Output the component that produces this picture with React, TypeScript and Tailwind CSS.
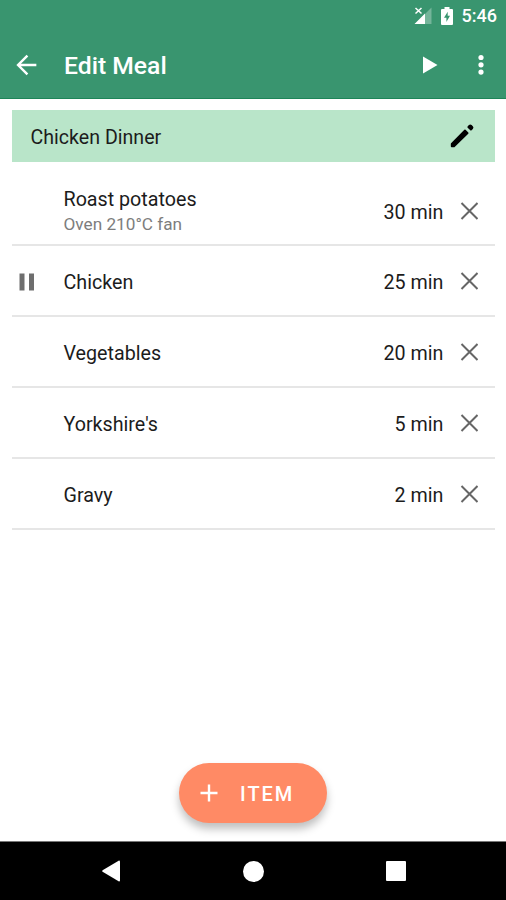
/* ================= DATA ================= */

type MealItem = {
  name: string;
  note?: string;
  minutes: number;
  paused?: boolean;
};

const items: MealItem[] = [
  { name: "Roast potatoes", note: "Oven 210°C fan", minutes: 30 },
  { name: "Chicken", minutes: 25, paused: true },
  { name: "Vegetables", minutes: 20 },
  { name: "Yorkshire's", minutes: 5 },
  { name: "Gravy", minutes: 2 },
];

/* ================= STATUS BAR ================= */

function StatusBar() {
  return (
    <div className="flex h-8 items-center justify-end pr-[9px] text-white">
      <svg className="mr-[9px] h-[18px] w-[18px]" viewBox="0 0 18 18" fill="currentColor">
        <path d="M17.500 0.500V17H1z" opacity="0.3" />
        <path d="M11 6.500V17H0.500z" />
        <path d="M1.500 1l6 5.500M7.500 1l-6 5.500" stroke="currentColor" strokeWidth="1.500" />
      </svg>
      <svg className="mr-[9px] h-[18px] w-3" viewBox="0 0 12 18">
        <path
          d="M3.500 0h5v2H11a1 1 0 0 1 1 1v14a1 1 0 0 1-1 1H1a1 1 0 0 1-1-1V3a1 1 0 0 1 1-1h2.500z"
          fill="currentColor"
        />
        <path d="M6.700 4.800v4H9L5.400 15v-4.300H3z" fill="#39956f" />
      </svg>
      <span className="text-[18px] leading-none font-medium">5:46</span>
    </div>
  );
}

/* ================= TOOLBAR ================= */

function Toolbar() {
  return (
    <div className="flex h-[66px] items-center pl-[10px] text-white">
      <button aria-label="Back">
        <svg className="h-[34px] w-[34px]" viewBox="0 0 24 24" fill="none" stroke="currentColor" strokeWidth="1.7">
          <path d="M18.600 12H6M12.300 5.400L5.700 12l6.600 6.600" />
        </svg>
      </button>
      <h1 className="ml-5 flex-1 pt-[2px] text-[24.700px] leading-none font-medium">Edit Meal</h1>
      <button aria-label="Start">
        <svg className="h-[18px] w-4" viewBox="0 0 16 18" fill="currentColor">
          <path d="M1 0.500v17L15.500 9z" />
        </svg>
      </button>
      <button aria-label="More options" className="mr-[22px] ml-10">
        <svg className="h-[22px] w-[6px]" viewBox="0 0 6 22" fill="currentColor">
          <circle cx="3" cy="3.500" r="2.600" />
          <circle cx="3" cy="10.800" r="2.600" />
          <circle cx="3" cy="18.100" r="2.600" />
        </svg>
      </button>
    </div>
  );
}

/* ================= ITEM ROW ================= */

function ItemRow({ item }: { item: MealItem }) {
  return (
    <li className="flex h-[70.800px] items-center border-b-2 border-[#e6e6e6]">
      <div className="w-[52px] pt-[2px] pl-[7px]">
        {item.paused && (
          <svg className="h-[18px] w-4" viewBox="0 0 16 18" fill="#6e6e6e">
            <path d="M0.500 0.500h5v17h-5zM10 0.500h5v17h-5z" />
          </svg>
        )}
      </div>
      <div className={item.note ? "flex-1 pt-[3px]" : "flex-1 pt-[5px]"}>
        <p className="text-[19.700px] leading-[26px]">{item.name}</p>
        {item.note && (
          <p className="text-[17.200px] leading-[23px] text-[#7d7d7d]">{item.note}</p>
        )}
      </div>
      <span className="pt-[5px] text-[19.700px] leading-[26px]">{item.minutes} min</span>
      <button aria-label={`Remove ${item.name}`} className="mr-[16.500px] ml-[16.500px] pt-px">
        <svg className="h-[18px] w-[18px]" viewBox="0 0 18 18" stroke="#666" strokeWidth="2">
          <path d="M1.500 1l16 16M17.500 1l-16 16" />
        </svg>
      </button>
    </li>
  );
}

/* ================= NAVIGATION BAR ================= */

function NavigationBar() {
  return (
    <nav className="flex h-[59px] items-center justify-between border-t border-[#777] bg-black pr-[100px] pl-[102px] text-white">
      <svg className="h-[22px] w-[18px]" viewBox="0 0 18 22" fill="currentColor">
        <path d="M17 0.500q1 0 1 1v19q0 1-1 1L0.600 11.800q-0.800-0.800 0-1.600z" />
      </svg>
      <span className="h-[21px] w-[21px] rounded-full bg-white" />
      <span className="h-5 w-5 rounded-[1px] bg-white" />
    </nav>
  );
}

/* ================= SCREEN ================= */

export default function App() {
  return (
    <div className="flex h-[900px] w-[506px] flex-col overflow-hidden bg-white font-['Roboto',sans-serif] text-[#1c1c1c]">
      <header className="h-[99px] border-b border-[#1d8558] bg-[#39956f]">
        <StatusBar />
        <Toolbar />
      </header>

      <main className="flex flex-1 flex-col px-[11.500px] pt-[11px]">
        <div className="flex h-[52px] items-center justify-between bg-[#b9e5c9] pr-4 pl-[19px]">
          <h2 className="pt-[3px] text-[19.600px] leading-none">Chicken Dinner</h2>
          <button aria-label="Rename meal">
            <svg
              className="h-[34px] w-[34px]"
              viewBox="0 0 24 24"
              fill="#000"
              stroke="#000"
              strokeWidth="1.200"
              strokeLinejoin="round"
            >
              <path d="M4.700 17.600v1.700h1.700L16 9.900l-1.900-1.900zM19.200 6.600a0.800 0.800 0 0 0 0-1.100L18.400 4.700a0.800 0.800 0 0 0-1.100 0L16.400 5.700l1.900 1.900z" />
            </svg>
          </button>
        </div>

        <ul className="mt-[13.700px]">
          {items.map((item) => (
            <ItemRow key={item.name} item={item} />
          ))}
        </ul>

        <button className="mt-auto mb-[18px] flex h-[60px] w-[148px] items-center self-center rounded-full bg-[#ff8a65] pl-[21px] text-white shadow-[0_6px_8px_rgba(0,0,0,0.25)]">
          <svg className="h-[18px] w-[18px]" viewBox="0 0 18 18" stroke="currentColor" strokeWidth="2.400">
            <path d="M9 0.500v17M0.500 9h17" />
          </svg>
          <span className="ml-[22px] pt-[2px] text-[20px] leading-none font-medium tracking-[2px]">ITEM</span>
        </button>
      </main>

      <NavigationBar />
    </div>
  );
}
